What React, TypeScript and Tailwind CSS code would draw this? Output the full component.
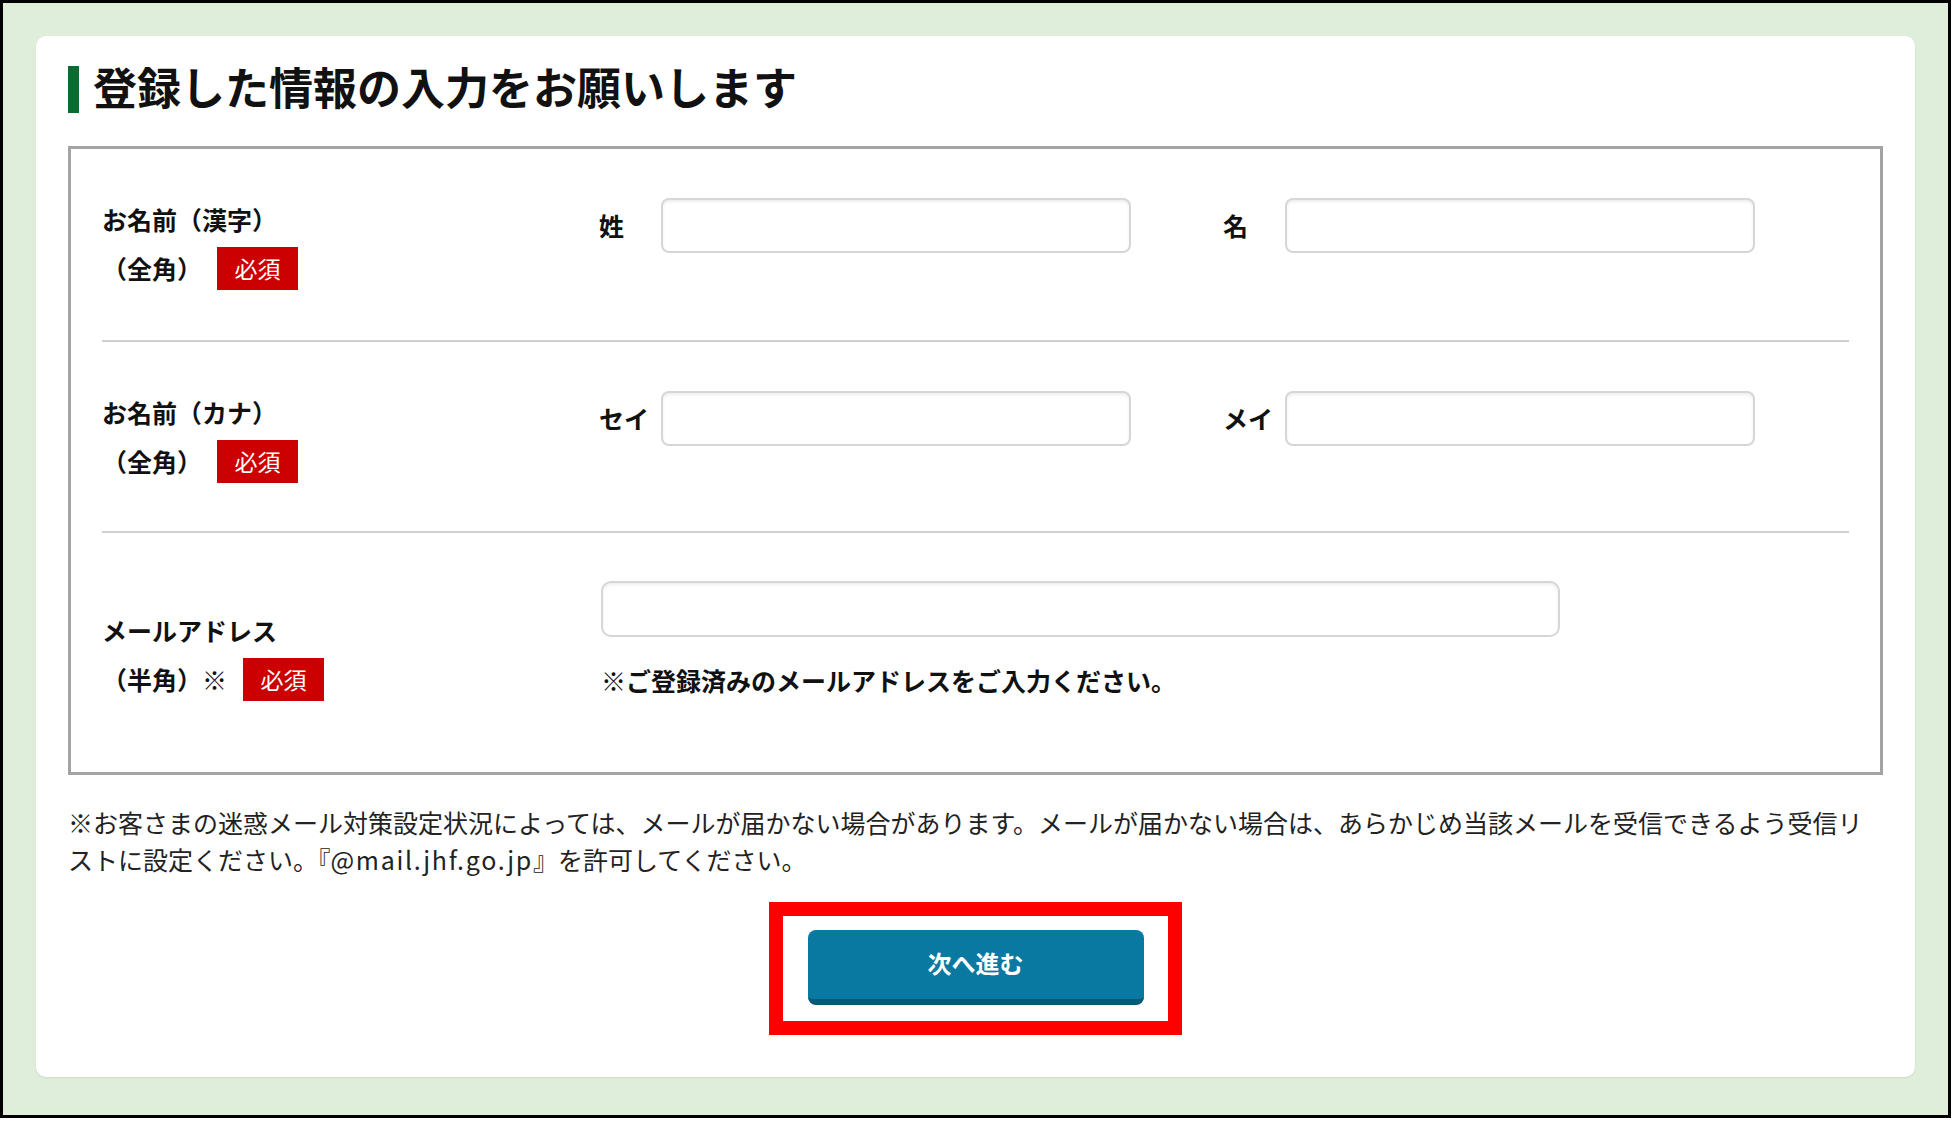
const jp = "font-['Noto_Sans_CJK_JP',sans-serif]";

function Badge({ gap }: { gap: string }) {
  return (
    <span
      className={`${gap} inline-flex h-[43px] w-[81px] items-center justify-center bg-[#cc0000] text-[23px] font-normal text-white`}
    >
      必須
    </span>
  );
}

function TextInput({ width }: { width: string }) {
  return (
    <div
      className={`${width} h-[55px] rounded-[8px] border-2 border-[#d6d6d6] bg-white shadow-[inset_0_2px_3px_rgba(0,0,0,0.07)]`}
    />
  );
}

function FieldLabel({ children }: { children: React.ReactNode }) {
  return <span className="w-[62px] shrink-0 text-[25px] font-bold leading-none text-[#111]">{children}</span>;
}

function NameRow({
  title,
  first,
  second,
  height,
}: {
  title: string;
  first: string;
  second: string;
  height: string;
}) {
  return (
    <div className={`flex ${height} pt-[49px]`}>
      <div className="w-[497px] shrink-0 pt-[3px]">
        <div className="h-[36px] text-[25px] font-bold leading-[36px] text-[#111]">{title}</div>
        <div className="mt-[10px] flex h-[43px] items-center text-[25px] font-bold text-[#111]">
          <span>（全角）</span>
          <Badge gap="ml-[15px]" />
        </div>
      </div>
      <div className="flex h-[55px] items-center">
        <FieldLabel>{first}</FieldLabel>
        <TextInput width="w-[470px]" />
        <div className="w-[92px]" />
        <FieldLabel>{second}</FieldLabel>
        <TextInput width="w-[470px]" />
      </div>
    </div>
  );
}

export default function App() {
  return (
    <div className={`h-[1127px] w-[1954px] bg-white ${jp}`}>
      <div className="h-[1118px] w-[1951px] border-[3px] border-black bg-[#deeedb] px-[33px] pt-[33px] pb-[38px]">
        <div className="flex h-full flex-col rounded-[10px] bg-white px-[32px] pt-[30px] shadow-[0_1px_2px_rgba(0,0,0,0.08)]">
          {/* title */}
          <div className="flex h-[47px] items-center">
            <div className="h-[47px] w-[11px] bg-[#0a6b33]" />
            <h1 className="ml-[14px] pb-[7px] text-[44px] font-bold leading-none text-[#111]">
              登録した情報の入力をお願いします
            </h1>
          </div>

          {/* form box */}
          <div className="mt-[33px] border-[3px] border-[#a3a3a3] px-[31px]">
            <NameRow title="お名前（漢字）" first="姓" second="名" height="h-[191px]" />
            <div className="h-[2px] bg-[#d0d0d0]" />
            <NameRow title="お名前（カナ）" first="セイ" second="メイ" height="h-[189px]" />
            <div className="h-[2px] bg-[#d0d0d0]" />

            <div className="flex h-[239px] pt-[48px]">
              <div className="w-[497px] shrink-0 pt-[31px]">
                <div className="h-[36px] text-[25px] font-bold leading-[36px] text-[#111]">メールアドレス</div>
                <div className="mt-[10px] flex h-[43px] items-center text-[25px] font-bold text-[#111]">
                  <span>（半角）※</span>
                  <Badge gap="ml-[16px]" />
                </div>
              </div>
              <div className="ml-[2px] flex flex-col">
                <div className="h-[56px] w-[959px] rounded-[10px] border-2 border-[#d6d6d6] bg-white shadow-[inset_0_2px_3px_rgba(0,0,0,0.07)]" />
                <p className="mt-[25px] text-[25px] font-bold leading-[36px] text-[#111]">
                  ※ご登録済みのメールアドレスをご入力ください。
                </p>
              </div>
            </div>
          </div>

          {/* notice */}
          <p className="mt-[29px] text-[25px] leading-[37px] text-[#222]">
            ※お客さまの迷惑メール対策設定状況によっては、メールが届かない場合があります。メールが届かない場合は、あらかじめ当該メールを受信できるよう受信リ
            <br />
            ストに設定ください。『<span className="tracking-[1.7px]">@mail.jhf.go.jp</span>』を許可してください。
          </p>

          {/* next button, outlined in red */}
          <div className="mx-auto mt-[24px] flex h-[133px] w-[413px] items-center justify-center border-[14px] border-[#ff0000]">
            <button className="-mt-[2px] h-[75px] w-[336px] rounded-[8px] border-b-[6px] border-[#065a77] bg-[#0a79a2] pb-[4px] text-[24px] font-bold text-white">
              次へ進む
            </button>
          </div>
        </div>
      </div>
    </div>
  );
}
